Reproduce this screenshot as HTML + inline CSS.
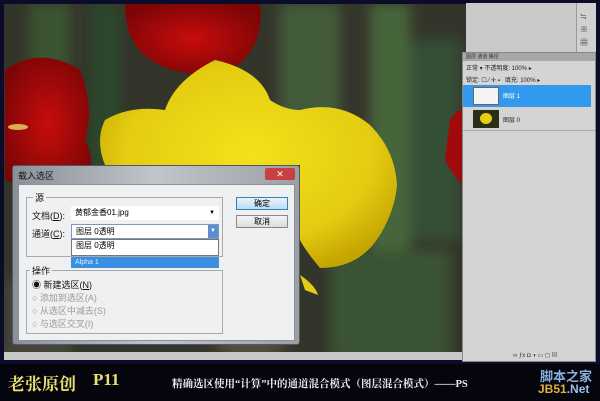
<!DOCTYPE html>
<html><head><meta charset="utf-8"><style>
*{margin:0;padding:0;box-sizing:border-box}
body{width:600px;height:401px;overflow:hidden;background:#0b0c2a;font-family:"Liberation Sans","Noto Sans CJK SC",sans-serif;position:relative}
.abs{position:absolute}
.t{font-size:9px;color:#111;white-space:nowrap}
.g{color:#999}
</style></head><body>
<svg class="abs" style="left:4px;top:4px" width="592" height="356" viewBox="4 4 592 356">
<defs>
<radialGradient id="y" cx="50%" cy="45%" r="60%"><stop offset="0" stop-color="#f2e21a"/><stop offset="0.7" stop-color="#e4cc12"/><stop offset="1" stop-color="#c4a400"/></radialGradient>
<radialGradient id="r" cx="50%" cy="50%" r="60%"><stop offset="0" stop-color="#c80c0c"/><stop offset="1" stop-color="#7a0505"/></radialGradient>
<filter id="b"><feGaussianBlur stdDeviation="6"/></filter>
</defs>
<rect x="4" y="4" width="592" height="356" fill="#34352a"/>
<g filter="url(#b)">
<rect x="30" y="4" width="40" height="350" fill="#3a5533"/>
<rect x="90" y="4" width="30" height="300" fill="#2c4629"/>
<rect x="280" y="4" width="60" height="120" fill="#425c3a"/>
<rect x="370" y="4" width="40" height="356" fill="#46653b"/>
<rect x="410" y="40" width="50" height="200" fill="#344f36"/>
<rect x="330" y="250" width="120" height="110" fill="#3b5235"/>
<rect x="4" y="280" width="60" height="80" fill="#44443a"/>
<ellipse cx="250" cy="330" rx="40" ry="30" fill="#55503c"/>
</g>
<path d="M125 4 L260 4 Q265 50 230 70 Q190 80 160 65 Q125 50 125 4Z" fill="url(#r)"/>
<path d="M5 70 Q40 45 80 70 Q95 110 85 140 Q100 170 80 185 Q40 195 5 180Z" fill="url(#r)"/>
<ellipse cx="18" cy="127" rx="10" ry="3" fill="#d8b050"/>
<path d="M450 120 Q470 90 470 150 L470 190 Q455 180 445 160Z" fill="#a00a0a"/>
<path d="M105 120 Q130 105 165 110 Q175 80 215 60 Q260 70 270 100 Q285 110 300 110 Q340 100 370 125 Q395 150 397 185 Q395 210 380 235 Q360 268 320 268 Q305 250 300 240 L300 165 L105 165 Q95 140 105 120Z" fill="url(#y)"/>
<path d="M300 275 Q315 285 318 295 L305 290Z" fill="#e2cc14"/>
<rect x="4" y="352" width="460" height="9" fill="#c8c8c8"/>
</svg>
<div class="abs" style="left:466px;top:3px;width:110px;height:50px;background:#c9c9c9"></div>
<div class="abs" style="left:576px;top:3px;width:20px;height:50px;background:#d0d0d0;border-left:1px solid #999"></div>
<div class="abs t" style="left:580px;top:10px;font-size:8px;line-height:13px;color:#333">≒<br>※<br>▦</div>
<div class="abs" style="left:462px;top:52px;width:134px;height:310px;background:#d4d4d4;border:1px solid #888">
 <div style="height:8px;background:#a8a8a8;font-size:5px;color:#333;padding-left:3px">图层 通道 路径</div>
 <div style="height:12px;font-size:6px;padding:2px 3px;color:#222">正常 ▾ 不透明度: 100% ▸</div>
 <div style="height:12px;font-size:6px;padding:2px 3px;color:#222">锁定: ☐ ⁄ ✛ ▪ &nbsp;&nbsp;填充: 100% ▸</div>
 <div style="height:22px;background:#3399ee;position:relative;width:128px"><div class="abs" style="left:10px;top:2px;width:26px;height:18px;background:#f4f4f4;border:1px solid #666"></div><span class="abs" style="left:40px;top:6px;font-size:6px;color:#fff">图层 1</span></div>
 <div style="height:24px;position:relative;border-bottom:1px solid #aaa"><div class="abs" style="left:10px;top:3px;width:26px;height:18px;background:#2a3018"><div style="margin:3px 7px;width:12px;height:11px;border-radius:50%;background:#e8d010"></div></div><span class="abs" style="left:40px;top:8px;font-size:6px;color:#222">图层 0</span></div>
 <div class="abs" style="left:50px;bottom:2px;font-size:6px;color:#333">∞ ƒx ◘ ◑ ▭ ◻ ▤</div>
</div>
<div class="abs" style="left:12px;top:165px;width:288px;height:180px;background:linear-gradient(90deg,#8a9098,#c0c5ca 50%,#9aa0a6);border:1px solid #556;border-radius:3px">
 <div class="abs t" style="left:5px;top:3px;font-size:9px">载入选区</div>
 <div class="abs" style="left:252px;top:2px;width:30px;height:12px;background:#c84040;border-radius:2px;color:#fff;font-size:9px;text-align:center;line-height:12px">✕</div>
 <div class="abs" style="left:5px;top:18px;width:277px;height:157px;background:#eef0f2;border:1px solid #8a9098">
  <div class="abs" style="left:7px;top:12px;width:197px;height:60px;border:1px solid #aaa"></div>
  <div class="abs t" style="left:14px;top:6px;background:#eef0f2;padding:0 2px">源</div>
  <div class="abs t" style="left:13px;top:24px">文档(<u>D</u>):</div>
  <div class="abs" style="left:52px;top:21px;width:148px;height:14px;background:#fff;font-size:8px;line-height:14px;padding-left:4px">黄郁金香01.jpg<span style="float:right;margin-right:4px;font-size:6px">▼</span></div>
  <div class="abs t" style="left:13px;top:42px">通道(<u>C</u>):</div>
  <div class="abs" style="left:52px;top:39px;width:148px;height:15px;background:#fff;border:1px solid #7a9ac0;font-size:8px;line-height:13px;padding-left:4px">图层 0透明<span class="abs" style="right:0;top:0;width:10px;height:13px;background:#5a8ed0;color:#fff;font-size:6px;text-align:center">▼</span></div>
  <div class="abs" style="left:52px;top:54px;width:148px;height:17px;background:#fff;border:1px solid #777;font-size:8px;padding-left:4px">图层 0透明</div>
  <div class="abs" style="left:52px;top:72px;width:148px;height:11px;background:#3a8fe0;color:#e0eeff;font-size:7px;padding-left:4px;line-height:11px">Alpha 1</div>
  <div class="abs" style="left:7px;top:85px;width:197px;height:64px;border:1px solid #aaa"></div>
  <div class="abs t" style="left:11px;top:79px;background:#eef0f2;padding:0 2px">操作</div>
  <div class="abs t" style="left:13px;top:93px">◉ 新建选区(<u>N</u>)</div>
  <div class="abs t g" style="left:13px;top:106px">○ 添加到选区(A)</div>
  <div class="abs t g" style="left:13px;top:119px">○ 从选区中减去(S)</div>
  <div class="abs t g" style="left:13px;top:132px">○ 与选区交叉(I)</div>
  <div class="abs" style="left:217px;top:12px;width:52px;height:13px;border:1px solid #3c7fb1;background:linear-gradient(#e8f4fc,#b8dcf4);font-size:8px;text-align:center;line-height:11px">确定</div>
  <div class="abs" style="left:217px;top:30px;width:52px;height:13px;border:1px solid #888;background:linear-gradient(#f4f4f4,#dcdcdc);font-size:8px;text-align:center;line-height:11px">取消</div>
 </div>
</div>
<div class="abs" style="left:0;top:364px;width:600px;height:37px;background:#05050d"></div>
<div class="abs" style="left:8px;top:370px;font-family:'Liberation Serif','Noto Serif CJK SC',serif;font-size:17px;font-weight:bold;color:#e8e070">老张原创</div>
<div class="abs" style="left:93px;top:370px;font-family:'Liberation Serif',serif;font-size:17px;font-weight:bold;color:#e8e070">P11</div>
<div class="abs" style="left:172px;top:376px;font-family:'Liberation Serif','Noto Serif CJK SC',serif;font-size:10.5px;font-weight:bold;color:#eee;white-space:nowrap">精确选区使用“计算”中的通道混合模式（图层混合模式）——PS</div>
<div class="abs" style="left:540px;top:366px;font-size:13px;font-weight:bold;color:#8ab0e0">脚本之家</div>
<div class="abs" style="left:538px;top:382px;font-size:12px;font-weight:bold;color:#e0b040">JB51<span style="color:#9ac0ee">.Net</span></div>
</body></html>
